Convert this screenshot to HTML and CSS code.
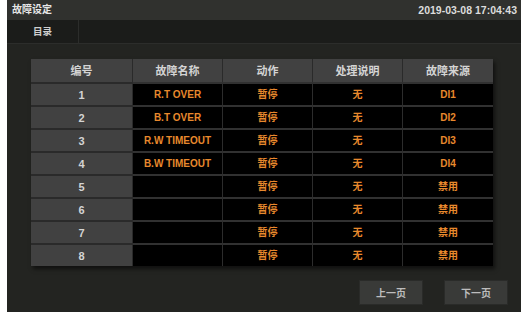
FILE: index.html
```html
<!DOCTYPE html>
<html>
<head>
<meta charset="utf-8">
<link rel="stylesheet" href="styles.css">
</head>
<body>
<div class="screen">
  <div class="titlebar">
    <span class="title">故障设定</span>
    <span class="clock">2019-03-08 17:04:43</span>
  </div>
  <div class="menubar">
    <div class="menu-item">目录</div>
  </div>
  <div class="content">
    <table class="grid">
      <thead>
        <tr><th class="c-no">编号</th><th>故障名称</th><th>动作</th><th>处理说明</th><th>故障来源</th></tr>
      </thead>
      <tbody>
        <tr><td class="num">1</td><td>R.T OVER</td><td>暂停</td><td>无</td><td>DI1</td></tr>
        <tr><td class="num">2</td><td>B.T OVER</td><td>暂停</td><td>无</td><td>DI2</td></tr>
        <tr><td class="num">3</td><td>R.W TIMEOUT</td><td>暂停</td><td>无</td><td>DI3</td></tr>
        <tr><td class="num">4</td><td>B.W TIMEOUT</td><td>暂停</td><td>无</td><td>DI4</td></tr>
        <tr><td class="num">5</td><td></td><td>暂停</td><td>无</td><td>禁用</td></tr>
        <tr><td class="num">6</td><td></td><td>暂停</td><td>无</td><td>禁用</td></tr>
        <tr><td class="num">7</td><td></td><td>暂停</td><td>无</td><td>禁用</td></tr>
        <tr><td class="num">8</td><td></td><td>暂停</td><td>无</td><td>禁用</td></tr>
      </tbody>
    </table>
    <div class="pager">
      <button class="btn">上一页</button>
      <button class="btn">下一页</button>
    </div>
  </div>
</div>
</body>
</html>
```
FILE: styles.css
```css
html, body {
  margin: 0;
  padding: 0;
  background: #ffffff;
}
body {
  font-family: "Liberation Sans", "Noto Sans CJK SC", sans-serif;
  width: 527px;
  height: 317px;
  overflow: hidden;
}
.screen {
  margin-left: 7px;
  width: 514px;
  height: 312px;
  background: #232421;
  display: flex;
  flex-direction: column;
}
.titlebar {
  height: 20px;
  background: #30312e;
  display: flex;
  align-items: center;
  justify-content: space-between;
  padding: 0 4px 0 5px;
  font-weight: bold;
  color: #e6e6e6;
  box-sizing: border-box;
  line-height: 12px;
}
.title {
  font-size: 10px;
}
.clock {
  font-size: 10.5px;
  color: #dcdcdc;
}
.menubar {
  height: 23px;
  background: #1b1c1a;
  border-bottom: 1px solid #2c2d2b;
  display: flex;
}
.menu-item {
  width: 71px;
  border-right: 1px solid #2c2d2b;
  display: flex;
  align-items: center;
  justify-content: center;
  font-size: 9.5px;
  font-weight: bold;
  color: #cfcfcf;
  line-height: 12px;
}
.content {
  flex: 1;
  padding: 15px 13px 0 24px;
  display: flex;
  flex-direction: column;
}
.grid {
  width: 462px;
  border-collapse: separate;
  border-spacing: 0;
  table-layout: fixed;
  box-shadow: 2px 3px 4px rgba(0, 0, 0, 0.55);
  background: #000;
}
.grid th {
  height: 23px;
  padding: 0;
  background: #414141;
  color: #d4d4d4;
  font-size: 11px;
  line-height: 12px;
  font-weight: bold;
  border-right: 1px solid #2a2a2a;
  width: 90px;
  box-sizing: border-box;
}
.grid th.c-no {
  width: 102px;
}
.grid td {
  height: 23px;
  box-sizing: border-box;
  padding: 0;
  text-align: center;
  color: #e8892d;
  font-size: 10px;
  line-height: 12px;
  font-weight: bold;
  border-right: 1px solid #2c2c2c;
  border-top: 2px solid #313131;
}
.grid td.num {
  background: #414141;
  color: #d4d4d4;
  font-size: 11px;
  border-right-color: #2a2a2a;
  border-top-color: #2a2a2a;
}
.grid tr > :last-child {
  border-right: none;
}
.pager {
  display: flex;
  justify-content: flex-end;
  gap: 21px;
  margin-top: 14px;
}
.btn {
  width: 64px;
  height: 25px;
  background: #393a38;
  border: 1px solid #2a2b29;
  color: #bdbdbd;
  font-family: "Noto Sans CJK SC", sans-serif;
  font-size: 10px;
  line-height: 12px;
  font-weight: bold;
  padding: 0;
}
```
